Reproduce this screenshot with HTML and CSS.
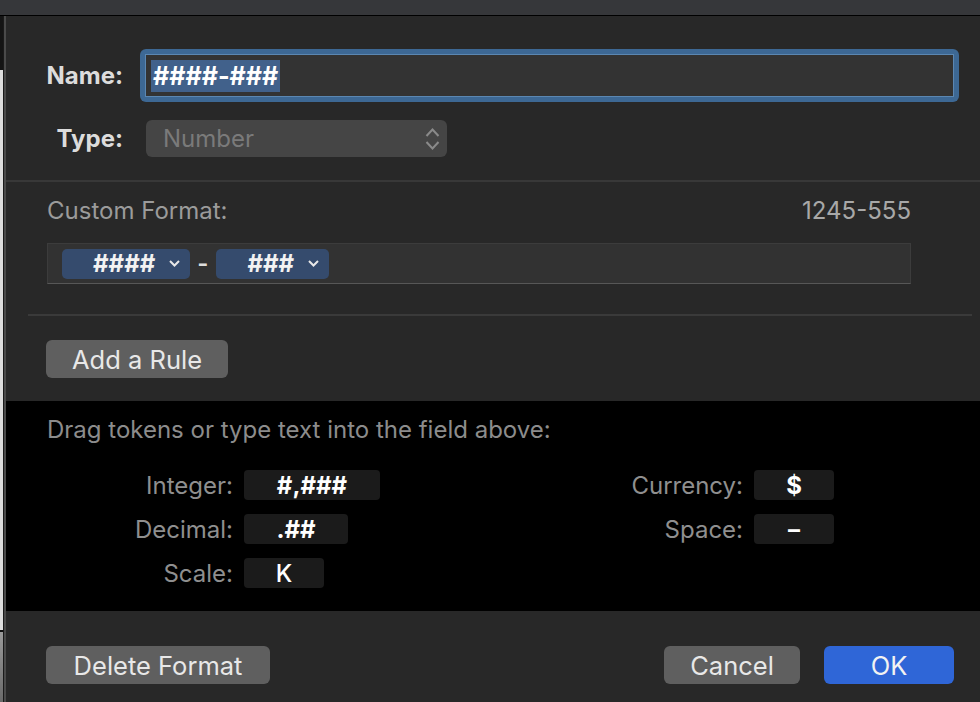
FILE: index.html
```html
<!DOCTYPE html>
<html lang="en">
<head>
  <meta charset="UTF-8" />
  <title>Custom Format</title>
  <link rel="stylesheet" href="styles.css">
</head>
<body>
  <div class="titlebar"></div>
  <div class="main">
    <div class="sheet-edge"></div>
    <div class="dialog">

      <div class="head">
        <div class="label">Name:</div>
        <div class="name-ring">
          <div class="name-field"><span class="sel">####-###</span></div>
        </div>
        <div class="label">Type:</div>
        <div class="type-popup">
          <span>Number</span>
          <svg class="updown" width="15" height="22" viewBox="0 0 15 22">
            <path d="M1.5 8 L7.5 1.5 L13.5 8" />
            <path d="M1.5 14 L7.5 20.5 L13.5 14" />
          </svg>
        </div>
      </div>

      <div class="sep"></div>

      <div class="format">
        <div class="format-head">
          <span>Custom Format:</span>
          <span class="preview">1245-555</span>
        </div>
        <div class="token-field">
          <div class="token">####<svg class="chev" width="11" height="7" viewBox="0 0 11 7"><path d="M1 1 L5.5 5.5 L10 1" /></svg></div>
          <span class="token-sep">-</span>
          <div class="token">###<svg class="chev" width="11" height="7" viewBox="0 0 11 7"><path d="M1 1 L5.5 5.5 L10 1" /></svg></div>
        </div>
      </div>

      <div class="rule-line"></div>

      <div class="rule-row">
        <button class="btn btn-rule">Add a Rule</button>
      </div>

      <div class="palette">
        <div class="palette-hint">Drag tokens or type text into the field above:</div>
        <div class="palette-grid">
          <div class="pal-label">Integer:</div>
          <div class="pal-token tok-int">#,###</div>
          <div class="pal-label">Currency:</div>
          <div class="pal-token">$</div>

          <div class="pal-label">Decimal:</div>
          <div class="pal-token tok-dec">.##</div>
          <div class="pal-label">Space:</div>
          <div class="pal-token">–</div>

          <div class="pal-label">Scale:</div>
          <div class="pal-token tok-scale">K</div>
        </div>
      </div>

      <div class="footer">
        <button class="btn btn-delete">Delete Format</button>
        <button class="btn btn-cancel">Cancel</button>
        <button class="btn btn-ok">OK</button>
      </div>

    </div>
  </div>
</body>
</html>
```

FILE: styles.css
```css
body {
  margin: 0;
  height: 100vh;
  display: flex;
  flex-direction: column;
  overflow: hidden;
  background: #282828;
  font-family: Inter, "Noto Sans", sans-serif;
  font-size: 24px;
  color: #e6e6e6;
}
.titlebar {
  height: 15px;
  flex-shrink: 0;
  background: #36373a;
  border-bottom: 1px solid #000;
}
.main {
  flex: 1;
  display: flex;
}
.sheet-edge {
  width: 3px;
  border-right: 1px solid #1a1a1a;
  background: linear-gradient(#141414 0, #141414 54px, #dedede 54px, #dedede 614px, #111 614px, #111 616px, #9a9a9a 616px, #6a6a6a 100%);
}
.dialog {
  flex: 1;
  display: flex;
  flex-direction: column;
  background: #282828;
  border-left: 2px solid #4a4a4a;
}

/* name / type */
.head {
  display: grid;
  grid-template-columns: 117px 1fr;
  column-gap: 17px;
  row-gap: 18px;
  align-items: center;
  padding: 33px 21px 23px 0;
}
.label {
  text-align: right;
  font-weight: 700;
  color: #dcdcdc;
}
.name-ring {
  background: #3d6894;
  padding: 5px;
  border-radius: 6px;
}
.name-field {
  height: 43px;
  box-sizing: border-box;
  display: flex;
  align-items: center;
  padding-left: 5px;
  background: #333;
  border: 1px solid #5b87b2;
  font-size: 25px;
  font-weight: 700;
  color: #fff;
}
.sel {
  background: #41618b;
  line-height: 32px;
  padding: 0 2px;
}
.type-popup {
  margin-left: 6px;
  width: 301px;
  height: 37px;
  box-sizing: border-box;
  display: flex;
  align-items: center;
  justify-content: space-between;
  padding: 0 7px 0 17px;
  background: #454545;
  border-radius: 6px;
  color: #7a7a7a;
}
.updown path {
  fill: none;
  stroke: #8a8a8a;
  stroke-width: 2;
}
.sep {
  height: 2px;
  background: #383838;
}

/* custom format */
.format {
  padding: 15px 69px 0 41px;
}
.format-head {
  display: flex;
  justify-content: space-between;
  line-height: 28px;
  color: #9b9b9b;
}
.preview {
  color: #a8a8a8;
}
.token-field {
  margin-top: 18px;
  height: 41px;
  box-sizing: border-box;
  display: flex;
  align-items: center;
  padding-left: 14px;
  background: #323232;
  border: 1px solid #3c3c3c;
  border-bottom-color: #575757;
}
.token {
  height: 30px;
  box-sizing: border-box;
  display: flex;
  align-items: center;
  padding: 0 10px 0 31px;
  background: #354b6d;
  border-radius: 5px;
  font-weight: 700;
  color: #f2f2f2;
}
.chev {
  margin-left: 14px;
}
.chev path {
  fill: none;
  stroke: #e8e8e8;
  stroke-width: 2;
}
.token-sep {
  margin: 0 8px 0 7px;
  font-weight: 600;
  color: #ddd;
}
.rule-line {
  margin: 30px 8px 0 22px;
  height: 2px;
  background: #3a3a3a;
}
.rule-row {
  padding: 24px 0 23px 40px;
}

/* buttons */
.btn {
  height: 38px;
  padding: 0;
  border: none;
  border-radius: 6px;
  background: #5f5f5f;
  color: #e8e8e8;
  font: inherit;
  font-size: 25.5px;
}
.btn-rule { width: 182px; }
.btn-delete { width: 224px; }
.btn-cancel { width: 136px; margin-left: auto; }
.btn-ok {
  width: 130px;
  background: #2f66d7;
  color: #f2f2f2;
}

/* token palette */
.palette {
  background: #000;
  padding: 15px 0 23px 41px;
}
.palette-hint {
  line-height: 28px;
  color: #8c8c8c;
}
.palette-grid {
  margin-top: 26px;
  display: grid;
  grid-template-columns: 186px 136px 352px 80px;
  column-gap: 11px;
  row-gap: 14px;
  align-items: center;
}
.pal-label {
  text-align: right;
  color: #8f8f8f;
}
.pal-token {
  height: 30px;
  display: flex;
  align-items: center;
  justify-content: center;
  background: #1b1b1b;
  border-radius: 4px;
  font-weight: 700;
  color: #fff;
}
.tok-int { width: 136px; }
.tok-dec { width: 104px; }
.tok-scale { width: 80px; font-weight: 500; }

.footer {
  flex: 1;
  display: flex;
  align-items: flex-start;
  gap: 24px;
  padding: 35px 26px 0 40px;
}
```
